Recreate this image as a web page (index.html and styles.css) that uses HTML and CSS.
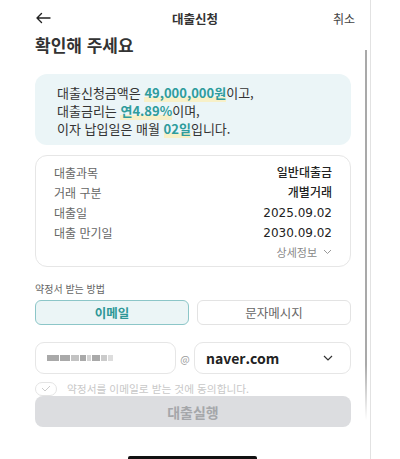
FILE: index.html
```html
<!DOCTYPE html>
<html lang="ko">
<head>
  <meta charset="UTF-8" />
  <meta name="viewport" content="width=device-width, initial-scale=1.0" />
  <title>대출신청</title>
  <link rel="stylesheet" href="styles.css">
</head>
<body>
  <div class="screen">
    <header class="topbar">
      <span class="back">
        <svg width="16" height="12" viewBox="0 0 16 12"><path d="M15 6H2M6.5 1.5L2 6l4.5 4.5" fill="none" stroke="#222" stroke-width="1.4" stroke-linecap="round" stroke-linejoin="round"/></svg>
      </span>
      <span class="title">대출신청</span>
      <span class="cancel">취소</span>
    </header>

    <h1 class="heading">확인해 주세요</h1>

    <div class="summary">
      <p>대출신청금액은 <em>49,000,000원</em>이고,</p>
      <p>대출금리는 <em>연4.89%</em>이며,</p>
      <p>이자 납입일은 매월 <em>02일</em>입니다.</p>
    </div>

    <div class="detail">
      <div class="row"><span>대출과목</span><b>일반대출금</b></div>
      <div class="row"><span>거래 구분</span><b>개별거래</b></div>
      <div class="row"><span>대출일</span><b>2025.09.02</b></div>
      <div class="row"><span>대출 만기일</span><b>2030.09.02</b></div>
      <div class="more">상세정보
        <svg width="9" height="6" viewBox="0 0 9 6"><path d="M1 1l3.5 3.5L8 1" fill="none" stroke="#999" stroke-width="1"/></svg>
      </div>
    </div>

    <div class="label">약정서 받는 방법</div>
    <div class="methods">
      <button class="method active">이메일</button>
      <button class="method">문자메시지</button>
    </div>

    <div class="email">
      <div class="field id">
        <i style="width:12px"></i><i style="width:10px"></i><i style="width:8px;opacity:.7"></i><i style="width:6px"></i><i style="width:4px;opacity:.5"></i><i style="width:8px"></i><i style="width:6px;opacity:.6"></i><i style="width:5px;opacity:.4"></i>
      </div>
      <span class="at">@</span>
      <div class="field domain">
        <span>naver.com</span>
        <svg width="10" height="6" viewBox="0 0 10 6"><path d="M1 1l4 4 4-4" fill="none" stroke="#333" stroke-width="1.2"/></svg>
      </div>
    </div>

    <div class="agree">
      <span class="check">
        <svg width="10" height="7" viewBox="0 0 10 7"><path d="M1 3l3 3 5-5" fill="none" stroke="#ccc" stroke-width="1"/></svg>
      </span>
      <span>약정서를 이메일로 받는 것에 동의합니다.</span>
    </div>

    <button class="submit">대출실행</button>

    <div class="scrollbar"></div>
    <div class="home"></div>
  </div>
</body>
</html>
```

FILE: styles.css
```css
body {
  margin: 0;
  padding: 0;
  background: #fff;
  font-family: 'Noto Sans CJK KR', 'Noto Sans', sans-serif;
  color: #222;
}
.screen {
  position: relative;
  width: 371px;
  height: 459px;
  border-right: 1px solid #e2e2e2;
  box-sizing: border-box;
  padding: 0 19px 0 35px;
  overflow: hidden;
}
.topbar {
  display: flex;
  align-items: center;
  justify-content: space-between;
  height: 36px;
  font-size: 12px;
}
.back {
  display: flex;
  width: 30px;
}
.title {
  font-size: 12.5px;
  font-weight: 700;
  color: #333;
}
.cancel {
  width: 30px;
  text-align: right;
  color: #444;
  margin-right: -4px;
}
.heading {
  margin: 0;
  font-size: 17px;
  font-weight: 700;
  line-height: 18px;
  color: #333;
}
.summary {
  margin-top: 20px;
  background: #ebf5f7;
  border-radius: 12px;
  padding: 10px 22px 10px;
  height: 71px;
  box-sizing: border-box;
}
.summary p {
  margin: 0;
  font-size: 13px;
  line-height: 18px;
  color: #333;
}
.summary em {
  font-style: normal;
  font-weight: 700;
  color: #2f9c9c;
  background: linear-gradient(transparent 72%, #f7f0c8 72%);
}
.detail {
  margin-top: 10px;
  border: 1px solid #e6e6e6;
  border-radius: 12px;
  padding: 7px 18px 5px;
}
.row {
  display: flex;
  justify-content: space-between;
  font-size: 12px;
  line-height: 20px;
}
.row span {
  color: #666;
}
.row b {
  font-family: 'DejaVu Sans', 'Noto Sans CJK KR', sans-serif;
  font-weight: 500;
  color: #222;
}
.more {
  display: flex;
  justify-content: flex-end;
  align-items: center;
  gap: 6px;
  font-size: 11px;
  line-height: 18px;
  color: #888;
}
.label {
  margin-top: 16px;
  font-size: 10px;
  line-height: 12px;
  color: #666;
}
.methods {
  display: grid;
  grid-template-columns: 1fr 1fr;
  gap: 8px;
  margin-top: 5px;
}
.method {
  height: 25px;
  border: 1px solid #e3e3e3;
  border-radius: 6px;
  background: #fff;
  font-family: inherit;
  font-size: 12.5px;
  color: #666;
}
.method.active {
  border-color: #8cc6c8;
  background: #ebf5f6;
  color: #2e9797;
  font-weight: 700;
}
.email {
  display: flex;
  align-items: center;
  margin-top: 17px;
}
.field {
  height: 32px;
  border: 1px solid #e6e6e6;
  border-radius: 9px;
  box-sizing: border-box;
  display: flex;
  align-items: center;
}
.id {
  width: 141px;
  padding-left: 11px;
  gap: 1px;
}
.id i {
  display: block;
  height: 6px;
  background: #a9a9a9;
}
.at {
  width: 18px;
  text-align: center;
  font-size: 10px;
  color: #999;
}
.domain {
  flex: 1;
  padding: 0 17px 0 11px;
  justify-content: space-between;
  font-size: 14px;
  font-weight: 600;
  color: #222;
}
.agree {
  display: flex;
  align-items: center;
  gap: 10px;
  margin-top: 7px;
  font-size: 10.7px;
  color: #c8c8c8;
}
.check {
  width: 20px;
  height: 12px;
  border: 1px solid #e4e4e4;
  border-radius: 7px;
  display: flex;
  justify-content: center;
  align-items: center;
}
.submit {
  display: block;
  width: 100%;
  height: 31px;
  margin-top: 0;
  border: none;
  border-radius: 8px;
  background: #dcdde0;
  color: #a5a7aa;
  font-family: inherit;
  font-size: 14px;
  font-weight: 600;
}
.scrollbar {
  position: absolute;
  right: 3px;
  top: 50px;
  width: 2px;
  height: 370px;
  background: linear-gradient(#a9a9a9 0, #a9a9a9 85%, #ffffff 100%);
}
.home {
  position: absolute;
  left: 128px;
  bottom: 0;
  width: 129px;
  height: 3px;
  background: #111;
  border-radius: 2px 2px 0 0;
}
```
